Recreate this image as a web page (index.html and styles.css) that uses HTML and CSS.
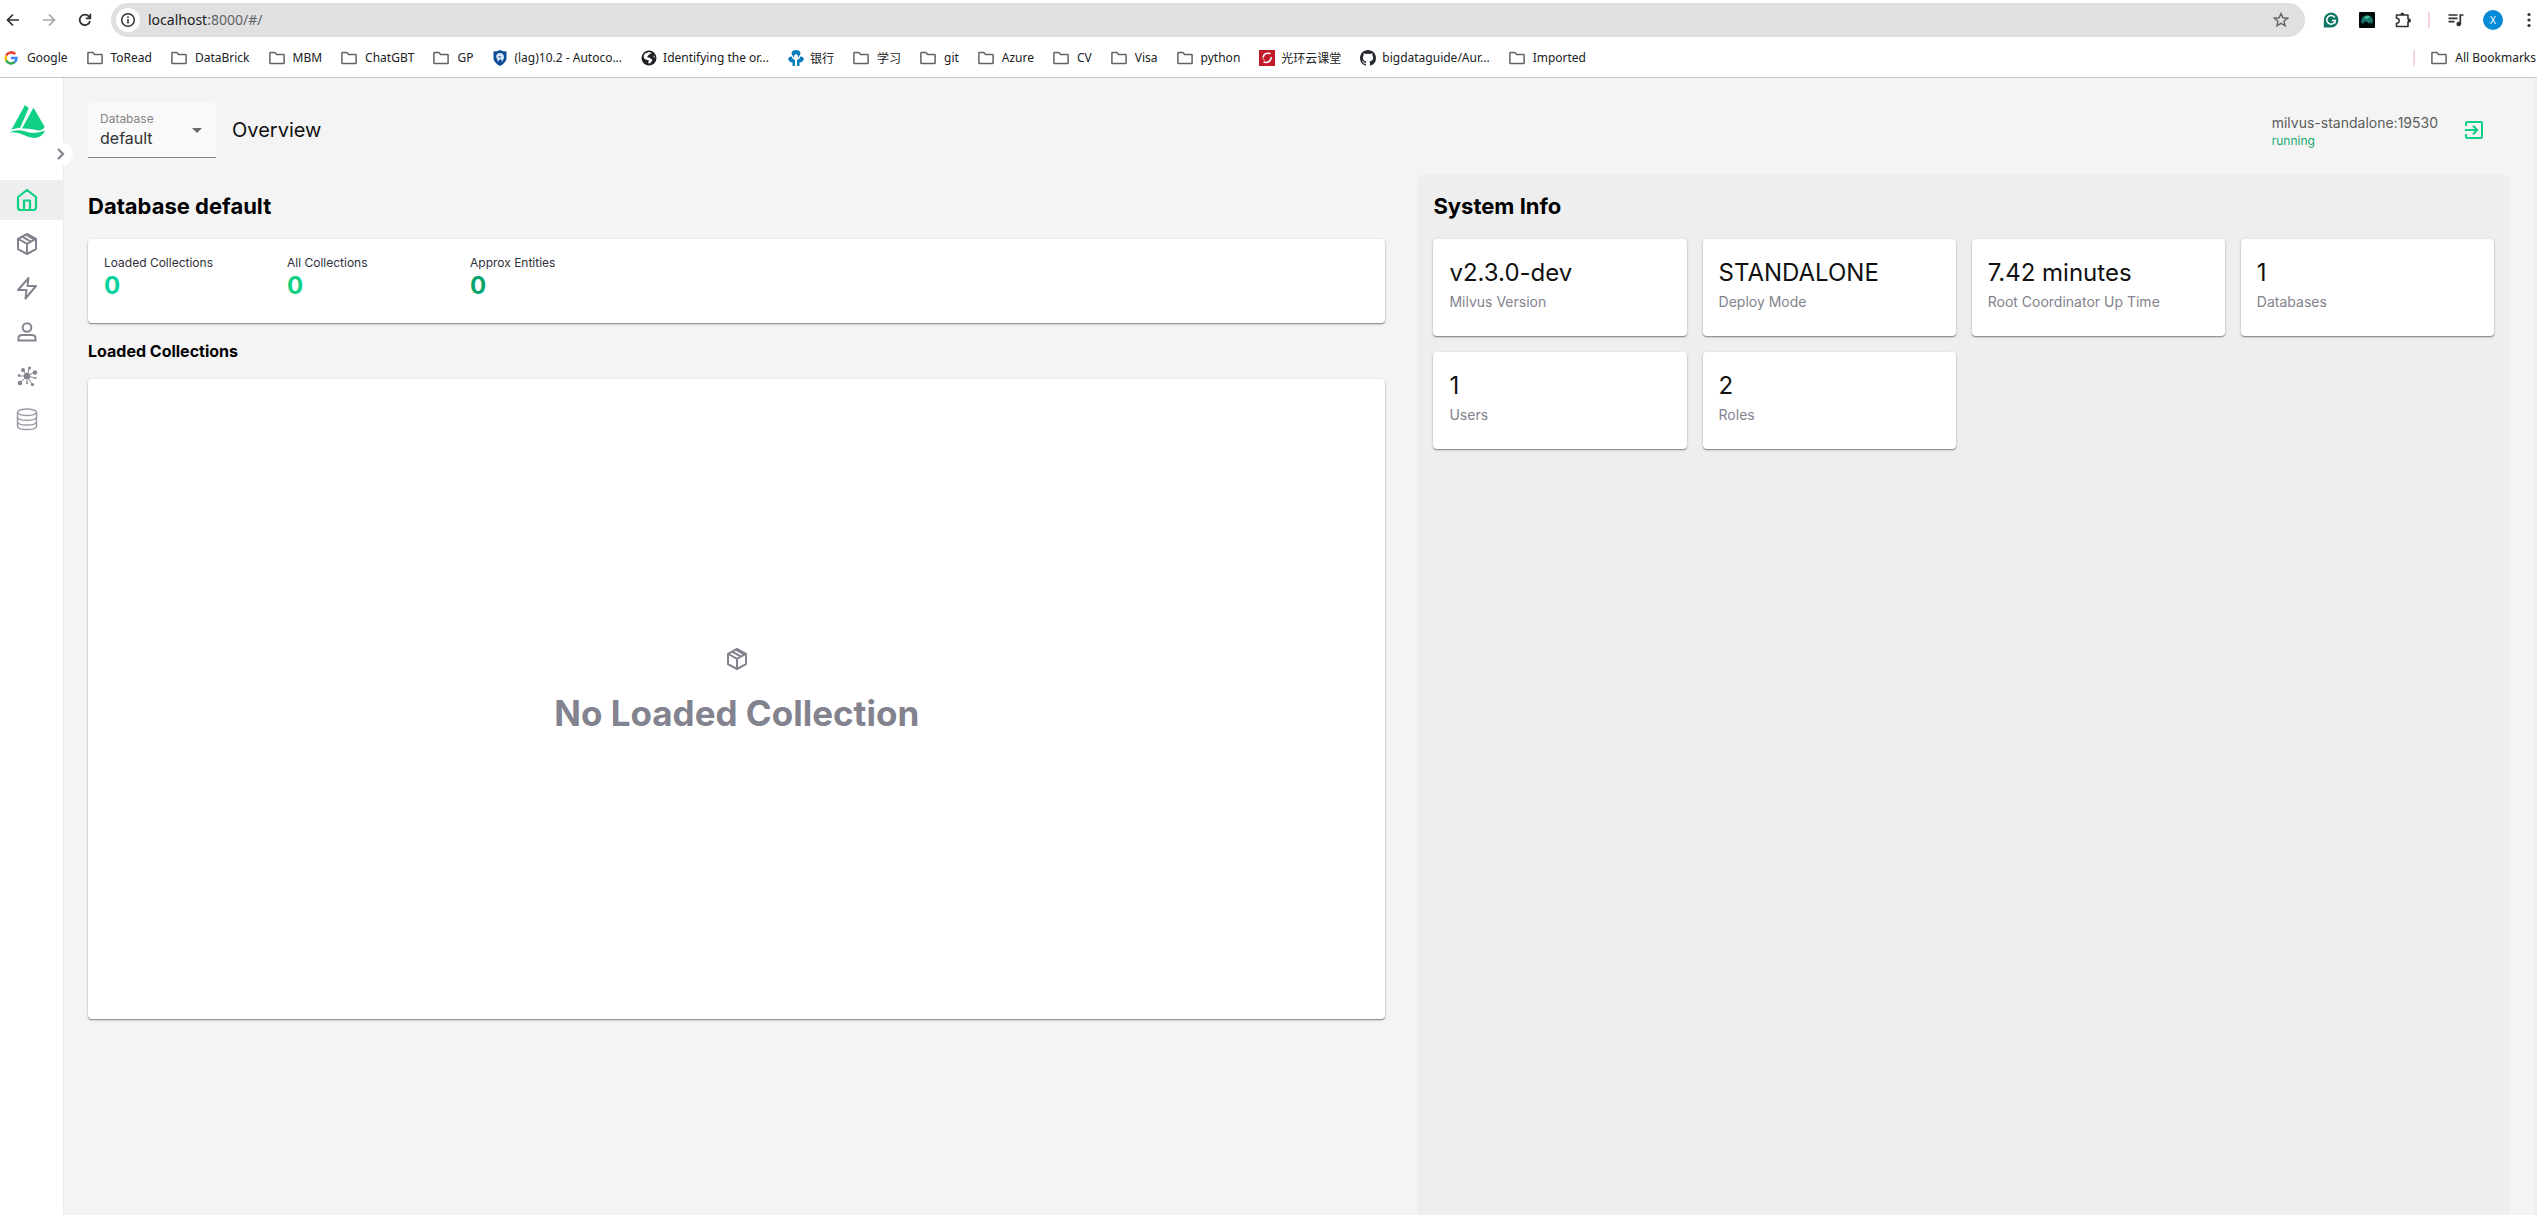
FILE: index.html
```html
<!DOCTYPE html>
<html lang="en">
<head>
<meta charset="utf-8">
<title>Attu - Overview</title>
<link rel="stylesheet" href="styles.css">
</head>
<body>
<svg class="defs" aria-hidden="true">
  <symbol id="folder" viewBox="0 0 16 16"><path d="M1.500 2.500h4.300l1.800 2h6.900q.6 0 .6.600v7.800q0 .6-.6.600h-13q-.6 0-.6-.6v-9.800q0-.6.6-.6z" fill="none" stroke="#5f6368" stroke-width="1.500"/></symbol>
  <symbol id="box" viewBox="0 0 22 24"><path d="M11 2 20 6.800v10.400L11 22 2 17.200V6.800zM2.500 7 11 11.800 19.500 7M11 11.800V22M6.200 4.700 15 9.600M10 2.700 18 7.500" fill="none" stroke="currentColor" stroke-width="2" stroke-linejoin="round"/></symbol>
</svg>
<div class="browser">
  <div class="toolbar">
    <div class="tools-left">
      <button class="icon-btn" aria-label="Back"><svg width="16" height="16" viewBox="0 0 16 16"><path d="M14 8H3M8 2.500 2.500 8 8 13.500" fill="none" stroke="#303134" stroke-width="1.700"/></svg></button>
      <button class="icon-btn" aria-label="Forward"><svg width="16" height="16" viewBox="0 0 16 16"><path d="M2 8h11M8 2.500 13.500 8 8 13.500" fill="none" stroke="#a5a6a8" stroke-width="1.700"/></svg></button>
      <button class="icon-btn" aria-label="Reload"><svg width="16" height="16" viewBox="0 0 16 16"><path d="M13 9A5.200 5.200 0 1 1 11.800 4.400L13.200 6M13.300 1.800v4.500H8.800" fill="none" stroke="#303134" stroke-width="1.800"/></svg></button>
    </div>
    <div class="omnibox">
      <span class="site-info"><svg width="16" height="16" viewBox="0 0 16 16"><circle cx="8" cy="8" r="6.300" fill="none" stroke="#303134" stroke-width="1.500"/><path d="M8 7.200v4.200M8 4.400v1.500" stroke="#303134" stroke-width="1.600"/></svg></span>
      <span class="url"><span class="host">localhost</span>:8000/#/</span>
      <button class="icon-btn" aria-label="Bookmark this page"><svg width="16" height="16" viewBox="0 0 16 16"><path d="m8 1.500 1.900 4.300 4.700.4-3.600 3.100 1.100 4.600L8 11.400l-4.100 2.500L5 9.300 1.400 6.200l4.700-.4z" fill="none" stroke="#5f6368" stroke-width="1.400"/></svg></button>
    </div>
    <div class="extensions">
      <button class="icon-btn" aria-label="Grammarly"><svg width="16" height="16" viewBox="0 0 16 16"><path d="M8 .5a7.500 7.500 0 1 1 0 15H.8V8A7.500 7.500 0 0 1 8 .5z" fill="#0f7864"/><path d="M11.700 5.500A4.300 4.300 0 1 0 12.300 8.600H9M12 11.500V8.600" fill="none" stroke="#fff" stroke-width="1.500"/></svg></button>
      <button class="icon-btn" aria-label="Extension"><svg width="16" height="16" viewBox="0 0 16 16"><rect width="16" height="16" rx="1" fill="#02090b"/><path d="M2 9.500Q3 3 9 3.200q4.500.7 5 6l-1.500 3-1-2-1.500 1.500Q8 9 5.500 9.500L4 12z" fill="#17796b"/><path d="M5 5.500q3-3 6-1L8 7z" fill="#45c3a2"/></svg></button>
      <button class="icon-btn" aria-label="Extensions"><svg width="16" height="16" viewBox="0 0 16 16"><path d="M1.500 3H13v4.200q1.800-.6 1.800 1.300T13 9.800v4.700H1.500v-3.300q2.600.1 2.600-2.400T1.500 6.300z" fill="none" stroke="#303134" stroke-width="1.600" stroke-linejoin="round"/><path d="M5.500 2.800q-.3-2.300 1.800-2.300t1.800 2.300zM13 7q3-.5 3 1.500T13 10z" fill="#303134"/></svg></button>
      <span class="bar-divider"></span>
      <button class="icon-btn" aria-label="Media controls"><svg width="16" height="16" viewBox="0 0 16 16"><path d="M.5 3h9M.5 6.300h9M.5 9.600h6M15.500 3h-3.200v9" fill="none" stroke="#303134" stroke-width="1.700"/><circle cx="10.700" cy="12" r="2.300" fill="#303134"/></svg></button>
      <button class="avatar" aria-label="Profile">X</button>
      <button class="icon-btn" aria-label="Menu"><svg width="16" height="16" viewBox="0 0 16 16" fill="#303134"><circle cx="8" cy="2.500" r="1.600"/><circle cx="8" cy="8" r="1.600"/><circle cx="8" cy="13.500" r="1.600"/></svg></button>
    </div>
  </div>
  <nav class="bookmarks" aria-label="Bookmarks">
    <a href="#"><svg viewBox="0 0 16 16"><g fill="none" stroke-width="2.600"><path d="M12.200 4.200A5.500 5.500 0 0 0 3.200 5.500" stroke="#ea4335"/><path d="M3.200 5.500a5.500 5.500 0 0 0 0 5" stroke="#fbbc05"/><path d="M3.200 10.500a5.500 5.500 0 0 0 8.500 1.600" stroke="#34a853"/><path d="M11.700 12.100A5.500 5.500 0 0 0 13.500 8H8" stroke="#4285f4"/></g></svg>Google</a>
    <a href="#"><svg><use href="#folder"/></svg>ToRead</a>
    <a href="#"><svg><use href="#folder"/></svg>DataBrick</a>
    <a href="#"><svg><use href="#folder"/></svg>MBM</a>
    <a href="#"><svg><use href="#folder"/></svg>ChatGBT</a>
    <a href="#"><svg><use href="#folder"/></svg>GP</a>
    <a class="site" href="#"><svg viewBox="0 0 16 16"><path d="M1.500 1.500Q5 1.500 8 0q3 1.500 6.500 1.500V9q-1 4-6.500 7Q2.500 13 1.500 9z" fill="#0d4f97"/><path d="M4 6q1-3 4-3 4 0 4 5l-2 4-1-3-2 1-1 2z" fill="#dbe8f5"/><path d="m6 6 3 .5L8 8z" fill="#0d4f97"/></svg>(lag)10.2 - Autoco...</a>
    <a class="site" href="#"><svg viewBox="0 0 16 16"><circle cx="8" cy="8" r="7.500" fill="#202124"/><path d="M4 3.500 8 2l3 1-3 1.500L6 7l3 1 2.500 2L9 13.500 7 13l1-2.500L3.500 9l-1-3zM13 5l1 3-1.500-1z" fill="#fff"/></svg>Identifying the or...</a>
    <a class="site" href="#"><svg viewBox="0 0 16 16"><g fill="#077dba"><path d="M8 0q4.500 0 4.500 4L10 8V5.500L8 4 6 5.500V8L3.500 4Q3.500 0 8 0z"/><path d="M0 8.500 3 6l2 3 2 1v6H4.500v-3.500Q1 12.500 0 8.500zM16 8.500 13 6l-2 3-2 1v6h2.500v-3.500Q15 12.500 16 8.500z"/></g></svg>银行</a>
    <a href="#"><svg><use href="#folder"/></svg>学习</a>
    <a href="#"><svg><use href="#folder"/></svg>git</a>
    <a href="#"><svg><use href="#folder"/></svg>Azure</a>
    <a href="#"><svg><use href="#folder"/></svg>CV</a>
    <a href="#"><svg><use href="#folder"/></svg>Visa</a>
    <a href="#"><svg><use href="#folder"/></svg>python</a>
    <a class="site" href="#"><svg viewBox="0 0 16 16"><path d="M0 0h16v16H0z" fill="#c01a2b"/><path d="M11.500 3.500Q5 2 4 7.500M4.500 12q6.500 2 8-5" fill="none" stroke="#fff" stroke-width="1.500"/><path d="M4 7q-.5 3 2 3.500" stroke="#e99" fill="none"/></svg>光环云课堂</a>
    <a class="site" href="#"><svg viewBox="0 0 16 16"><path fill="#24292f" d="M8 0C3.580 0 0 3.580 0 8c0 3.540 2.290 6.530 5.470 7.590.4.070.55-.17.55-.38 0-.19-.01-.82-.01-1.490-2.010.37-2.530-.49-2.690-.94-.09-.23-.48-.94-.82-1.130-.28-.15-.68-.52-.01-.53.63-.01 1.080.58 1.230.82.720 1.210 1.870.87 2.330.66.070-.52.280-.87.510-1.070-1.780-.2-3.640-.89-3.640-3.950 0-.87.310-1.590.82-2.150-.08-.2-.36-1.020.08-2.120 0 0 .67-.21 2.200.82.640-.18 1.320-.27 2-.27s1.360.09 2 .27c1.530-1.040 2.200-.82 2.200-.82.440 1.100.16 1.920.08 2.120.51.560.82 1.270.82 2.150 0 3.070-1.870 3.750-3.650 3.950.29.250.54.730.54 1.480 0 1.070-.01 1.930-.01 2.200 0 .21.150.46.550.38A8.010 8.010 0 0 0 16 8c0-4.420-3.580-8-8-8z"/></svg>bigdataguide/Aur...</a>
    <a href="#"><svg><use href="#folder"/></svg>Imported</a>
    <span class="bar-divider all-divider"></span>
    <a href="#"><svg><use href="#folder"/></svg>All Bookmarks</a>
  </nav>
</div>
<div class="app">
  <aside class="sidebar">
    <a class="logo" href="#" aria-label="Milvus"><svg width="36" height="33" viewBox="0 0 106 97" fill="#0fd085"><path d="M47 0 58 9 33 67Q18 68 7 73z"/><path d="M72 8 105 64Q100 75 86 75 62 68 38 69z"/><path d="M0 81Q24 70 46 77 74 88 106 75 97 97 74 97 58 96 44 88 22 78 0 81z"/></svg></a>
    <button class="expand" aria-label="Expand menu"><svg width="10" height="14" viewBox="0 0 10 14"><path d="m2 2 5 5-5 5" fill="none" stroke="#82838e" stroke-width="2.200"/></svg></button>
    <nav class="menu" aria-label="Main">
      <a class="active" href="#" aria-label="Overview"><svg viewBox="0 0 22 24"><path d="M2 9 11 2l9 7v10.500q0 2.500-2.500 2.500h-13Q2 22 2 19.500zM8 22v-9.500h6V22" fill="none" stroke="currentColor" stroke-width="2.200" stroke-linejoin="round"/></svg></a>
      <a href="#" aria-label="Collections"><svg><use href="#box"/></svg></a>
      <a href="#" aria-label="Search"><svg viewBox="0 0 22 24"><path d="M12.500 2 2 14h8.500l-1 8.500L20 10h-8.500z" fill="none" stroke="currentColor" stroke-width="2" stroke-linejoin="round"/></svg></a>
      <a href="#" aria-label="Users"><svg viewBox="0 0 22 24"><g fill="none" stroke="currentColor" stroke-width="2"><circle cx="11" cy="7.500" r="4.300"/><path d="M2.500 20.500V18q0-3 4-3h9q4 0 4 3v2.500z"/></g></svg></a>
      <a href="#" aria-label="System view"><svg viewBox="0 0 22 24" fill="currentColor"><path d="M11 12 7 6M11 12l2.500-8M11 12l8-4M11 12H3M11 12l-7 7M11 12v7M11 12l5 8M11 12l8 2" stroke="currentColor" stroke-width="1"/><circle cx="11" cy="12" r="3.200"/><circle cx="7" cy="6" r="2"/><circle cx="13.500" cy="4" r="1.500"/><circle cx="19" cy="8.500" r="2.200"/><circle cx="3" cy="11.500" r="1.300"/><circle cx="4" cy="19" r="2.300"/><circle cx="11" cy="19" r="1"/><circle cx="16.500" cy="20.500" r="1.600"/><circle cx="19.500" cy="14" r="1"/></svg></a>
      <a href="#" aria-label="Databases"><svg viewBox="0 0 22 24"><g fill="none" stroke="#9c9ca6" stroke-width="1.500"><ellipse cx="11" cy="4.300" rx="9.500" ry="3.300"/><path d="M1.500 4.300v14c0 4.400 19 4.400 19 0v-14M1.500 9c0 4.400 19 4.400 19 0M1.500 13.700c0 4.400 19 4.400 19 0"/></g></svg></a>
    </nav>
  </aside>
  <main class="content">
    <header class="page-header">
      <div class="db-select">
        <label for="database">Database</label>
        <select id="database"><option>default</option></select>
        <svg class="caret" width="10" height="5" viewBox="0 0 10 5"><path d="M0 0h10L5 5z" fill="#6b6b6b"/></svg>
      </div>
      <h1>Overview</h1>
      <div class="server">
        <div class="address">milvus-standalone:19530</div>
        <div class="status">running</div>
      </div>
      <button class="logout" aria-label="Disconnect"><svg width="18" height="18" viewBox="0 0 18 18"><path d="M1 5V2q0-1 1-1h14q1 0 1 1v14q0 1-1 1H2q-1 0-1-1v-3M0 9h12M8 4.800 12.200 9 8 13.200" fill="none" stroke="#0fd085" stroke-width="2"/></svg></button>
    </header>
    <div class="columns">
      <section class="overview">
        <h2>Database default</h2>
        <dl class="card stats">
          <div><dt>Loaded Collections</dt><dd class="loaded">0</dd></div>
          <div><dt>All Collections</dt><dd class="all">0</dd></div>
          <div><dt>Approx Entities</dt><dd class="entities">0</dd></div>
        </dl>
        <h3>Loaded Collections</h3>
        <div class="card empty">
          <svg><use href="#box"/></svg>
          <p>No Loaded Collection</p>
        </div>
      </section>
      <section class="system">
        <h2>System Info</h2>
        <div class="info-grid">
          <div class="card info"><p class="value">v2.3.0-dev</p><p class="name">Milvus Version</p></div>
          <div class="card info"><p class="value">STANDALONE</p><p class="name">Deploy Mode</p></div>
          <div class="card info"><p class="value">7.42 minutes</p><p class="name">Root Coordinator Up Time</p></div>
          <div class="card info"><p class="value">1</p><p class="name">Databases</p></div>
          <div class="card info"><p class="value">1</p><p class="name">Users</p></div>
          <div class="card info"><p class="value">2</p><p class="name">Roles</p></div>
        </div>
      </section>
    </div>
  </main>
</div>
</body>
</html>
```
FILE: styles.css
```css
* { box-sizing: border-box; }
body {
  margin: 0;
  min-height: 100vh;
  display: flex;
  flex-direction: column;
  background: #f4f4f4;
  color: #000;
  font-family: Inter, "Liberation Sans", sans-serif;
}
h1, h2, h3, p, dl, dd { margin: 0; }
button { padding: 0; border: 0; background: none; font: inherit; }
a { color: inherit; text-decoration: none; }
svg { display: block; flex: none; }
.defs { position: absolute; width: 0; height: 0; }

/* Browser bar */
.browser {
  background: #fff;
  border-bottom: 1px solid #c8c8c8;
  font-family: "Noto Sans", "Noto Sans CJK SC", sans-serif;
  color: #202124;
}
.toolbar { display: flex; align-items: center; height: 40px; }
.icon-btn { display: grid; place-items: center; width: 16px; height: 16px; }
.tools-left { display: flex; gap: 20px; padding: 0 18px 0 5px; }
.omnibox {
  flex: 1;
  display: flex;
  align-items: center;
  gap: 8px;
  height: 34px;
  padding: 0 16px 0 5px;
  border-radius: 17px;
  background: #e0e0e0;
}
.site-info {
  display: grid;
  place-items: center;
  width: 24px;
  height: 24px;
  border-radius: 50%;
  background: #fff;
}
.url { flex: 1; font-size: 14px; line-height: 20px; padding-bottom: 1px; color: #5f6368; }
.host { color: #202124; }
.extensions { display: flex; align-items: center; gap: 20px; padding-left: 18px; }
.extensions .bar-divider { margin: 0 -2px 0 -3px; }
.bar-divider { width: 2px; height: 16px; background: #f6d3e2; }
.avatar {
  width: 20px;
  height: 20px;
  margin: 0 -2px 0 -1px;
  border-radius: 50%;
  background: #058ad6;
  color: #fff;
  font-size: 10px;
}
.bookmarks {
  display: flex;
  align-items: center;
  gap: 19px;
  height: 37px;
  padding: 0 1px 2px 3px;
  font-size: 12px;
  white-space: nowrap;
}
.bookmarks a { display: flex; align-items: center; gap: 8px; }
.bookmarks .site { gap: 6px; }
.bookmarks svg { width: 16px; height: 16px; }
.all-divider { margin-left: auto; margin-right: -3px; }

/* Application shell */
.app { flex: 1; display: flex; }
.sidebar {
  position: relative;
  width: 64px;
  padding-top: 27px;
  background: #fff;
  border-right: 1px solid #eaeaea;
}
.logo { display: block; padding-left: 9px; height: 75px; }
.expand {
  position: absolute;
  top: 64px;
  right: -10px;
  display: grid;
  place-items: center;
  width: 24px;
  height: 24px;
  border-radius: 50%;
  background: #fff;
}
.menu { display: grid; gap: 4px; }
.menu a {
  display: flex;
  align-items: center;
  height: 40px;
  padding-left: 16px;
  color: #82838e;
}
.menu svg { width: 22px; height: 24px; }
.menu .active { background: #eee; color: #0fd085; }

.content {
  flex: 1;
  min-width: 0;
  display: flex;
  flex-direction: column;
  padding: 24px 24px 0;
  border-right: 3px solid #eee;
}
.page-header { display: flex; align-items: center; gap: 16px; height: 56px; }
.db-select {
  position: relative;
  width: 128px;
  height: 56px;
  padding: 9px 12px 0;
  border-bottom: 1px solid #858585;
  border-radius: 4px 4px 0 0;
  background: #f9f9f9;
}
.db-select label { display: block; font-size: 12px; line-height: 16px; color: #858585; }
.db-select select {
  display: block;
  width: 100%;
  height: 22px;
  padding: 0;
  border: 0;
  background: none;
  appearance: none;
  color: #333;
  font: 16px/22px Inter, sans-serif;
}
.caret { position: absolute; right: 14px; top: 26px; pointer-events: none; }
h1 { flex: 1; font-size: 20px; line-height: 24px; font-weight: 400; color: #111; }
.server { padding-top: 3px; font-size: 14px; line-height: 18px; color: #5c5c5c; }
.status { font-size: 12px; color: #1ba970; }
.logout { padding: 0 27px 0 11px; }

.columns {
  flex: 1;
  display: grid;
  grid-template-columns: 19fr 16fr;
  gap: 32px;
  padding-top: 16px;
}
h2 { margin-bottom: 17px; font-size: 22px; line-height: 32px; font-weight: 700; }
h3 { margin: 16px 0; font-size: 16px; line-height: 24px; font-weight: 700; }
.card {
  border-radius: 4px;
  background: #fff;
  box-shadow: 0 1px 1px #8c8c8c, 0 1px 3px #00000033;
}
.overview { padding-top: 16px; }
.stats { display: flex; gap: 16px; min-height: 84px; padding: 16px; }
.stats div { width: 167px; }
.stats dt { font-size: 12px; line-height: 16px; color: #30303c; }
.stats dd { font-size: 24px; line-height: 29px; font-weight: 700; }
.loaded { color: #06d39d; }
.all { color: #0fd085; }
.entities { color: #08a56c; }
.empty {
  display: flex;
  flex-direction: column;
  align-items: center;
  justify-content: center;
  gap: 20px;
  min-height: 640px;
  padding-bottom: 16px;
  color: #82838e;
}
.empty svg { width: 22px; height: 24px; }
.empty p { font-size: 35px; line-height: 44px; font-weight: 700; }

.system { padding: 16px; border-radius: 8px 8px 0 0; background: #eee; }
.info-grid { display: grid; grid-template-columns: repeat(4, 1fr); gap: 16px; }
.info { min-height: 97px; padding: 16px; }
.value { margin-bottom: 2px; font-size: 24px; line-height: 36px; color: #111; }
.name { font-size: 14px; line-height: 18px; color: #82838e; }
```
